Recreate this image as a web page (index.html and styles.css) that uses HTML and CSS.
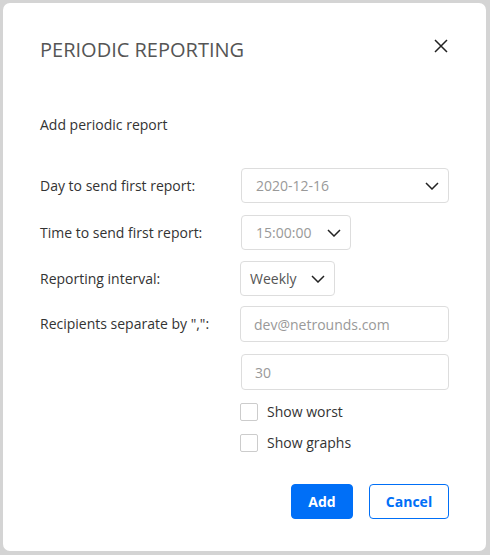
FILE: index.html
```html
<!DOCTYPE html>
<html lang="en">
<head>
    <meta charset="UTF-8">
    <title>Periodic reporting</title>
    <link rel="stylesheet" href="styles.css">
</head>
<body>
    <div class="modal">
        <div class="modal-header">
            <h2>PERIODIC REPORTING</h2>
            <button class="close" aria-label="Close">
                <svg width="14" height="14" viewBox="0 0 14 14"><path d="M1 1L13 13M13 1L1 13" stroke="#222" stroke-width="1.5" fill="none"/></svg>
            </button>
        </div>

        <p class="subtitle">Add periodic report</p>

        <!-- form rows -->
        <div class="row">
            <label>Day to send first report:</label>
            <div class="select wide"><span>2020-12-16</span><svg width="14" height="8" viewBox="0 0 14 8"><path d="M1 1L7 7L13 1" stroke="#222" stroke-width="1.5" fill="none"/></svg></div>
        </div>
        <div class="row near">
            <label>Time to send first report:</label>
            <div class="select time"><span>15:00:00</span><svg width="14" height="8" viewBox="0 0 14 8"><path d="M1 1L7 7L13 1" stroke="#222" stroke-width="1.5" fill="none"/></svg></div>
        </div>
        <div class="row tight">
            <label>Reporting interval:</label>
            <div class="select interval"><span class="dark">Weekly</span><svg width="14" height="8" viewBox="0 0 14 8"><path d="M1 1L7 7L13 1" stroke="#222" stroke-width="1.5" fill="none"/></svg></div>
        </div>
        <div class="row">
            <label>Recipients separate by ",":</label>
            <input class="field" type="text" placeholder="dev@netrounds.com">
        </div>
        <div class="row">
            <label></label>
            <input class="field second" type="text" placeholder="30">
        </div>
        <div class="row checks">
            <label></label>
            <div class="check-list">
                <label class="check"><span class="box"></span>Show worst</label>
                <label class="check"><span class="box"></span>Show graphs</label>
            </div>
        </div>

        <div class="actions">
            <button class="btn primary">Add</button>
            <button class="btn outline">Cancel</button>
        </div>
    </div>
</body>
</html>
```

FILE: styles.css
```css
body {
    margin: 0;
    padding: 3px;
    background-color: #d4d4d4;
    font-family: "Open Sans", sans-serif;
    font-size: 14px;
    color: #333;
}
.modal {
    background-color: #fff;
    border-radius: 7px;
    width: 483px;
    height: 548px;
    box-sizing: border-box;
    padding: 32px 37px 0 37px;
}
.modal-header {
    display: flex;
    justify-content: space-between;
    align-items: flex-start;
}
.modal-header h2 {
    margin: 0;
    font-size: 20px;
    font-weight: 400;
    color: #555;
    line-height: 30px;
}
.close {
    border: none;
    background: none;
    padding: 0;
    margin: 4px 1px 0 0;
    cursor: pointer;
}
.subtitle {
    margin: 50px 0 33px;
    line-height: 20px;
}
.row {
    display: flex;
    align-items: center;
    margin-bottom: 12px;
}
.row.near {
    margin-bottom: 11px;
}
.row.tight {
    margin-bottom: 10px;
}
.row > label {
    width: 200px;
    flex-shrink: 0;
    line-height: 20px;
}
.select {
    height: 35px;
    box-sizing: border-box;
    border: 1px solid #ddd;
    border-radius: 4px;
    display: flex;
    align-items: center;
    justify-content: space-between;
    padding: 0 9px 0 14px;
    color: #999;
}
.select svg {
    display: block;
}
.select .dark {
    color: #555;
}
.wide {
    width: 208px;
    margin-left: 1px;
}
.time {
    width: 110px;
    margin-left: 1px;
}
.interval {
    width: 95px;
    padding-left: 9px;
}
.field {
    width: 210px;
    height: 36px;
    box-sizing: border-box;
    border: 1px solid #ddd;
    border-radius: 4px;
    padding: 0 13px;
    font-family: inherit;
    font-size: 14px;
    color: #333;
}
.field::placeholder {
    color: #999;
}
.field.second {
    margin-left: 1px;
    width: 208px;
}
.check-list {
    display: flex;
    flex-direction: column;
    gap: 13px;
    margin-top: 1px;
}
.check {
    display: flex;
    align-items: center;
    line-height: 18px;
}
.box {
    width: 16px;
    height: 16px;
    border: 1px solid #ccc;
    border-radius: 2px;
    margin-right: 9px;
}
.actions {
    display: flex;
    justify-content: flex-end;
    gap: 16px;
    margin-top: 32px;
}
.btn {
    height: 35px;
    border-radius: 4px;
    font-family: inherit;
    font-size: 14px;
    font-weight: 700;
    cursor: pointer;
}
.primary {
    width: 62px;
    background-color: #006ff7;
    border: 1px solid #006ff7;
    color: #fff;
}
.outline {
    width: 80px;
    background-color: #fff;
    border: 1px solid #006ff7;
    color: #006ff7;
}
```
